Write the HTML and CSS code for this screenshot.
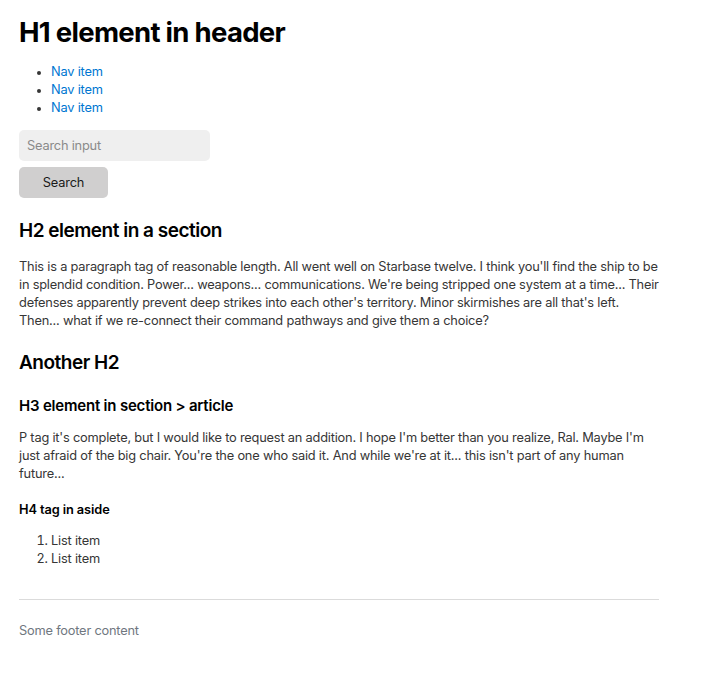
FILE: index.html
```html
<!DOCTYPE html>
<html lang="en">
<head>
<meta charset="utf-8">
<title>Classless test page</title>
<link rel="stylesheet" href="styles.css">
</head>
<body>
<div class="page">
  <header class="top">
    <h1 class="title">H1 element in header</h1>
    <nav>
      <ul class="nav-list">
        <li><a class="nav-link" href="#">Nav item</a></li>
        <li><a class="nav-link" href="#">Nav item</a></li>
        <li><a class="nav-link" href="#">Nav item</a></li>
      </ul>
    </nav>
    <form class="search">
      <input class="search-input" type="text" placeholder="Search input">
      <button class="search-btn" type="button">Search</button>
    </form>
  </header>
  <section class="sec">
    <h2 class="h2 first">H2 element in a section</h2>
    <p class="para">This is a paragraph tag of reasonable length. All went well on Starbase twelve. I think you'll find the ship to be in splendid condition. Power... weapons... communications. We're being stripped one system at a time... Their defenses apparently prevent deep strikes into each other's territory. Minor skirmishes are all that's left. Then... what if we re-connect their command pathways and give them a choice?</p>
  </section>
  <section class="sec">
    <h2 class="h2">Another H2</h2>
    <article>
      <h3 class="h3">H3 element in section &gt; article</h3>
      <p class="para">P tag it's complete, but I would like to request an addition. I hope I'm better than you realize, Ral. Maybe I'm just afraid of the big chair. You're the one who said it. And while we're at it... this isn't part of any human future...</p>
    </article>
    <aside>
      <h4 class="h4">H4 tag in aside</h4>
      <ol class="num-list">
        <li>List item</li>
        <li>List item</li>
      </ol>
    </aside>
  </section>
  <hr class="rule">
  <footer class="foot">Some footer content</footer>
</div>
</body>
</html>
```

FILE: styles.css
```css
html, body {
  margin: 0;
  padding: 0;
  background: #ffffff;
}
body {
  font-family: Inter, "Liberation Sans", sans-serif;
  font-size: 12.8px;
  line-height: 18px;
  letter-spacing: -0.2px;
  color: #363636;
}
.page {
  width: 640px;
  padding: 15px 19px 30px;
}
.title {
  margin: 0;
  font-size: 27.5px;
  line-height: 34px;
  font-weight: 700;
  color: #000;
  letter-spacing: -0.7px;
}
.nav-list {
  margin: 14px 0 13px;
  padding-left: 32px;
}
.nav-list li::marker {
  font-size: 11.5px;
}
.nav-link {
  color: #0076d1;
  text-decoration: none;
}
.search {
  display: flex;
  flex-direction: column;
  align-items: flex-start;
  gap: 6px;
  margin: 0;
}
.search-input {
  box-sizing: border-box;
  width: 191px;
  height: 31px;
  padding: 0 8px;
  border: none;
  border-radius: 5px;
  background: #efefef;
  font: inherit;
  letter-spacing: inherit;
  color: #363636;
  outline: none;
}
.search-input::placeholder {
  color: #8a8a8a;
}
.search-btn {
  box-sizing: border-box;
  width: 89px;
  height: 31px;
  padding: 0;
  border: none;
  border-radius: 5px;
  background: #d0cfcf;
  font: inherit;
  letter-spacing: inherit;
  color: #1a1a1a;
}
.h2 {
  margin: 19px 0 14px;
  font-size: 19px;
  line-height: 27px;
  font-weight: 600;
  color: #000;
  letter-spacing: -0.5px;
}
.h3 {
  margin: 19px 0 13px;
  font-size: 15px;
  line-height: 21px;
  font-weight: 600;
  color: #000;
  letter-spacing: -0.2px;
}
.h4 {
  margin: 18px 0 13px;
  font-size: 12.8px;
  line-height: 18px;
  font-weight: 600;
  color: #000;
  letter-spacing: -0.1px;
}
.para {
  margin: 0;
}
.num-list {
  margin: 0;
  padding-left: 32px;
}
.rule {
  margin: 31px 0 0;
  border: none;
  border-top: 1px solid #dbdbdb;
  height: 0;
}
.foot {
  margin-top: 22px;
  color: #70777f;
}
```
